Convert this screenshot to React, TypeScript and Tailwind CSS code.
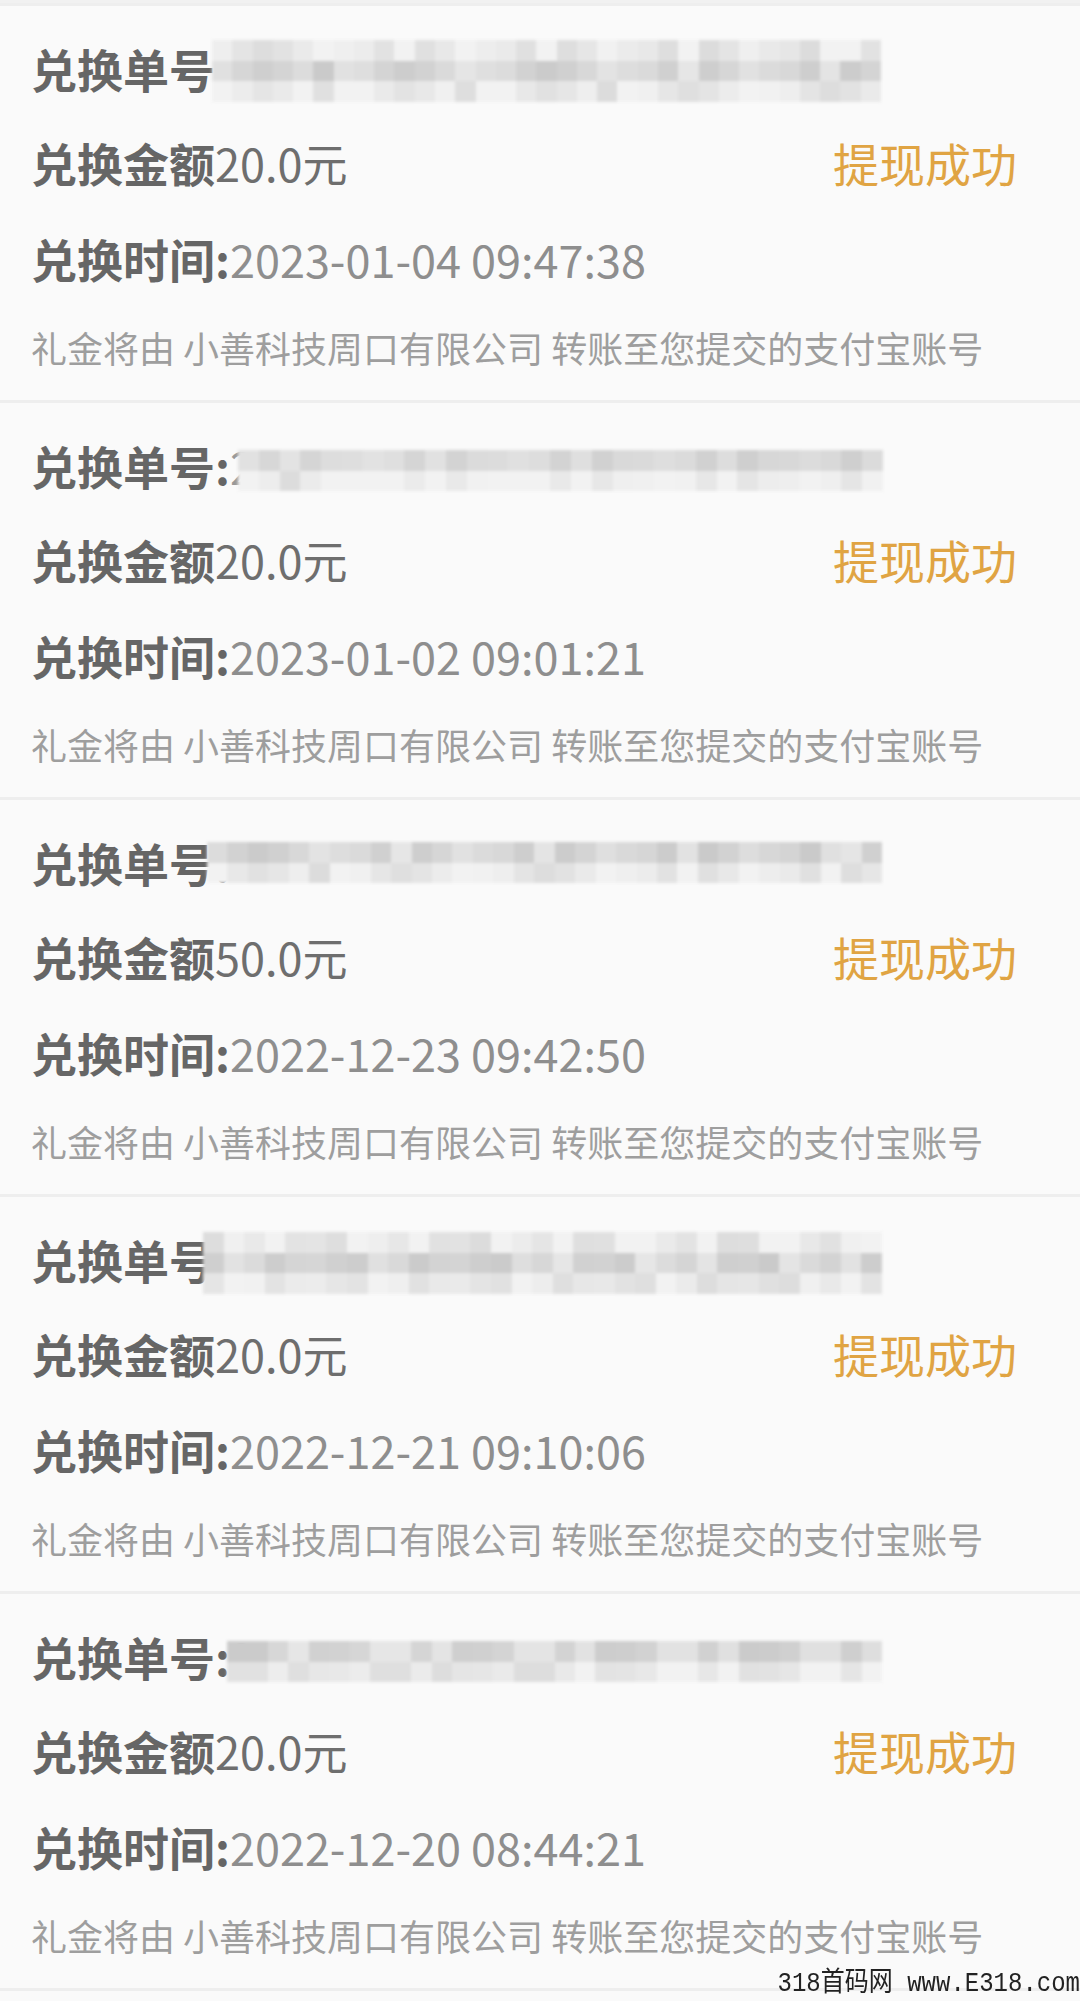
import React from 'react';

type Record = {
  amount: string;
  time: string;
  peek: string;
  mosaic: { left: number; top: number; width: number; rows: number; seed: number };
};

const records: Record[] = [
  { amount: '20.0元', time: '2023-01-04 09:47:38', peek: '', mosaic: { left: 212, top: 18, width: 669, rows: 3, seed: 3 } },
  { amount: '20.0元', time: '2023-01-02 09:01:21', peek: '2', mosaic: { left: 238, top: 31, width: 645, rows: 2, seed: 7 } },
  { amount: '50.0元', time: '2022-12-23 09:42:50', peek: '', mosaic: { left: 207, top: 26, width: 675, rows: 2, seed: 11 } },
  { amount: '20.0元', time: '2022-12-21 09:10:06', peek: '', mosaic: { left: 203, top: 19, width: 679, rows: 3, seed: 5 } },
  { amount: '20.0元', time: '2022-12-20 08:44:21', peek: '2', mosaic: { left: 227, top: 31, width: 655, rows: 2, seed: 13 } },
];

// pixelated cover over the order number
function Mosaic({ left, top, width, rows, seed }: Record['mosaic']) {
  const cols = Math.round(width / 20.5);
  const cells = [];
  for (let r = 0; r < rows; r++) {
    for (let c = 0; c < cols; c++) {
      const n = (c * 37 + r * 91 + seed * 53 + ((c * c + seed) % 7) * 11) % 29;
      const middle = rows === 3 ? r === 1 : r === 0;
      const base = middle ? 202 : 220;
      const v = Math.min(242, base + n);
      cells.push(<div key={r + '-' + c} style={{ backgroundColor: `rgb(${v},${v},${v})` }} />);
    }
  }
  return (
    <div
      className="absolute rounded-[12px] bg-[#ececec] blur-[1.5px] grid"
      style={{
        left,
        top,
        width,
        height: rows * 20.5,
        gridTemplateColumns: `repeat(${cols}, 1fr)`,
      }}
    >
      {cells}
    </div>
  );
}

function RecordCard({ rec }: { rec: Record }) {
  return (
    <div className="border-t-[3px] border-[#eeeeee] h-[397px] pl-[31px] pr-[63px] pt-[16px]">
      <div className="relative h-[92px] flex items-center">
        <span className="text-[46px] leading-none font-bold text-[#666666]">兑换单号:</span>
        <span className="text-[45px] leading-none text-[#999999]">{rec.peek}</span>
        <div className="absolute inset-y-0 left-[-31px] w-[1080px]">
          <Mosaic {...rec.mosaic} />
        </div>
      </div>
      <div className="h-[96px] flex items-center justify-between">
        <div className="flex items-center">
          <span className="text-[46px] leading-none font-bold text-[#666666]">兑换金额</span>
          <span className="text-[45px] leading-none text-[#6e6e6e]">{rec.amount}</span>
        </div>
        <span className="text-[46px] leading-none text-[#e0a443]">提现成功</span>
      </div>
      <div className="h-[96px] flex items-center">
        <span className="text-[46px] leading-none font-bold text-[#666666]">兑换时间:</span>
        <span className="text-[45px] leading-none text-[#8e8e8e]">{rec.time}</span>
      </div>
      <div className="h-[82px] flex items-center">
        <span className="text-[36px] leading-none text-[#9e9e9e] whitespace-nowrap">
          礼金将由 小善科技周口有限公司 转账至您提交的支付宝账号
        </span>
      </div>
    </div>
  );
}

export default function App() {
  return (
    <div className="relative min-h-[2001px] w-[1080px] overflow-hidden bg-[#fafafa] font-['Noto_Sans_CJK_SC','Noto_Sans',sans-serif]">
      <div className="h-[3px] bg-[#f1f1f1]" />
      {records.map((rec) => (
        <RecordCard key={rec.time} rec={rec} />
      ))}
      <div className="border-t-[3px] border-[#eeeeee]" />
      <div className="absolute right-0 bottom-[3px] text-[24px] leading-none text-[#222222] font-['Liberation_Mono','Noto_Sans_CJK_SC',monospace] scale-y-[1.15] origin-bottom whitespace-nowrap">
        318首码网 www.E318.com
      </div>
    </div>
  );
}
